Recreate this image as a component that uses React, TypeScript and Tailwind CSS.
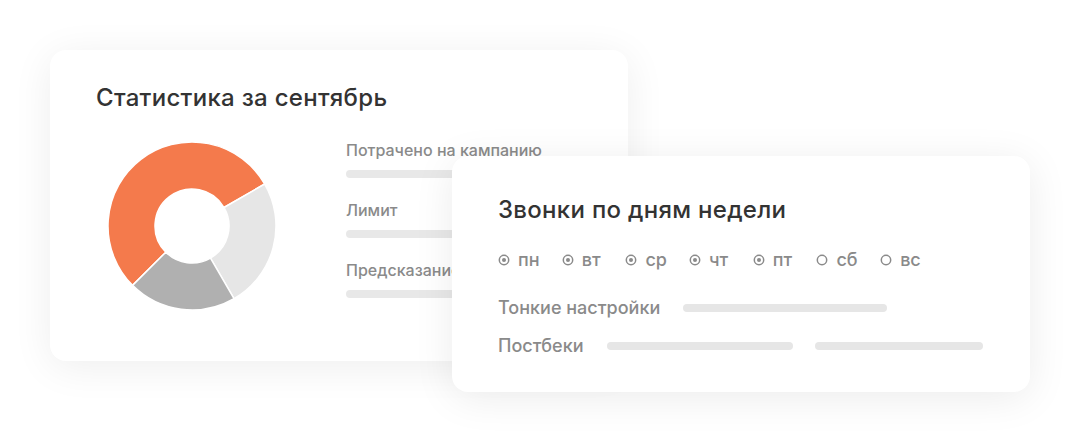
import React from "react";

type Slice = { from: number; to: number; color: string };

const SLICES: Slice[] = [
  { from: 225, to: 420, color: "#F47A4C" },
  { from: 60, to: 150, color: "#E6E6E6" },
  { from: 150, to: 225, color: "#B0B0B0" },
];

function point(cx: number, cy: number, r: number, deg: number) {
  const a = (deg * Math.PI) / 180;
  return [cx + r * Math.sin(a), cy - r * Math.cos(a)];
}

function arcPath(cx: number, cy: number, R: number, r: number, from: number, to: number) {
  const large = to - from > 180 ? 1 : 0;
  const [x1, y1] = point(cx, cy, R, from);
  const [x2, y2] = point(cx, cy, R, to);
  const [x3, y3] = point(cx, cy, r, to);
  const [x4, y4] = point(cx, cy, r, from);
  return `M${x1} ${y1} A${R} ${R} 0 ${large} 1 ${x2} ${y2} L${x3} ${y3} A${r} ${r} 0 ${large} 0 ${x4} ${y4} Z`;
}

function Donut() {
  return (
    <svg width="170" height="170" viewBox="0 0 170 170" className="shrink-0">
      {SLICES.map((s) => (
        <path
          key={s.from}
          d={arcPath(85, 85, 84, 37, s.from, s.to)}
          fill={s.color}
          stroke="#ffffff"
          strokeWidth="1.5"
          strokeLinejoin="round"
        />
      ))}
    </svg>
  );
}

function Radio({ checked }: { checked: boolean }) {
  return (
    <svg width="12" height="12" viewBox="0 0 12 12" className="shrink-0">
      <circle cx="6" cy="6" r="4.7" fill="none" stroke="#8A8A8A" strokeWidth="1.5" />
      {checked && <circle cx="6" cy="6" r="2" fill="#8A8A8A" />}
    </svg>
  );
}

const DAYS: { label: string; on: boolean }[] = [
  { label: "пн", on: true },
  { label: "вт", on: true },
  { label: "ср", on: true },
  { label: "чт", on: true },
  { label: "пт", on: true },
  { label: "сб", on: false },
  { label: "вс", on: false },
];

const STATS = ["Потрачено на кампанию", "Лимит", "Предсказание"];

export default function App() {
  return (
    <div
      className="relative w-[1080px] h-[442px] bg-white overflow-hidden"
      style={{ fontFamily: "Inter, 'Noto Sans', sans-serif" }}
    >
      <div className="pt-[50px] pl-[50px]">
        {/* September stats card */}
        <div className="w-[578px] h-[311px] rounded-[16px] bg-white shadow-[0_6px_40px_rgba(0,0,0,0.07)] pt-[34px] pl-[46px]">
          <h2 className="text-[24px] leading-[28px] font-medium text-[#333333] tracking-[0.3px]">
            Статистика за сентябрь
          </h2>
          <div className="flex mt-[29px]">
            <div className="ml-[11px]">
              <Donut />
            </div>
            <div className="ml-[69px] flex flex-col gap-[22px] -mt-[1px]">
              {STATS.map((s) => (
                <div key={s} className="flex flex-col gap-[10px]">
                  <span className="text-[16px] leading-[20px] font-medium text-[#8A8A8A] whitespace-nowrap">
                    {s}
                  </span>
                  <div className="w-[240px] h-[8px] rounded-full bg-[#E8E8E8]" />
                </div>
              ))}
            </div>
          </div>
        </div>
      </div>

      {/* Weekday calls card, lying over the stats card */}
      <div className="absolute left-[452px] top-[156px] w-[578px] h-[236px] rounded-[16px] bg-white shadow-[0_6px_40px_rgba(0,0,0,0.08)] pt-[40px] pl-[46px] pr-[46px]">
        <h2 className="text-[24px] leading-[28px] font-medium text-[#333333] tracking-[0.3px]">
          Звонки по дням недели
        </h2>
        <div className="flex items-center mt-[26px]">
          {DAYS.map((d) => (
            <div key={d.label} className="flex items-center gap-[8px] w-[63.7px]">
              <Radio checked={d.on} />
              <span className="text-[18px] leading-[20px] font-medium text-[#8A8A8A]">
                {d.label}
              </span>
            </div>
          ))}
        </div>
        <div className="flex items-center mt-[28px]">
          <span className="text-[18px] leading-[20px] font-medium text-[#8A8A8A] whitespace-nowrap">
            Тонкие настройки
          </span>
          <div className="ml-[23px] w-[204px] h-[8px] rounded-full bg-[#E6E6E6]" />
        </div>
        <div className="flex items-center mt-[18px]">
          <span className="text-[18px] leading-[20px] font-medium text-[#8A8A8A] whitespace-nowrap">
            Постбеки
          </span>
          <div className="ml-[24px] w-[186px] h-[8px] rounded-full bg-[#E6E6E6]" />
          <div className="ml-[22px] w-[168px] h-[8px] rounded-full bg-[#E6E6E6]" />
        </div>
      </div>
    </div>
  );
}
